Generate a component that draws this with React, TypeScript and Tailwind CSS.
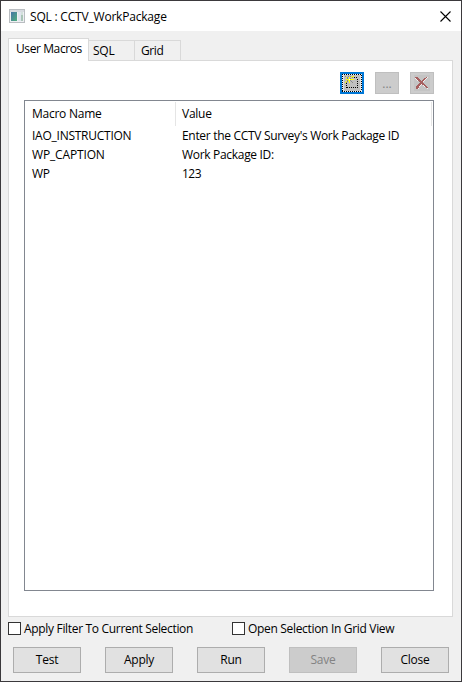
import React from 'react';

const rows = [
  { name: 'IAO_INSTRUCTION', value: "Enter the CCTV Survey's Work Package ID", nameCls: 'tracking-[-0.25px]', valueCls: 'tracking-[-0.31px]' },
  { name: 'WP_CAPTION', value: 'Work Package ID:', nameCls: 'tracking-[-0.15px]', valueCls: 'tracking-[-0.31px]' },
  { name: 'WP', value: '123', nameCls: 'tracking-[-0.25px]', valueCls: 'tracking-[-0.5px]' },
];

const palette: Record<string, string> = {
  y: '#ffff00',
  g: '#8a8a8a',
  w: '#ffffff',
  r: '#a65f5f',
  h: '#f3efef',
};

// Sparkle over the top-left corner of a dotted frame
const newPixels = [
  'g..g.g.yy',
  '.yg.y.yg.',
  '..g.yg...',
  '.yyywyyyy',
  '..gyyg...',
  '.yg.y.g..',
  'yg..y..g.',
];

// Bevelled cross: red strokes with a light edge on the right
const deletePixels = [
  'rrr........rh.',
  'hrrr.....rrh..',
  '.hrrr...rrh...',
  '..hrrr.rrh....',
  '....rrrrh.....',
  '.....rrr......',
  '....rrrrr.....',
  '...rrrhrrr....',
  '..rrrh..hrr...',
  '.rrrh....hrr..',
  '.rrr.......rr.',
  '.rrh........h.',
];

function Pixels({ map, x, y }: { map: string[]; x: number; y: number }) {
  return (
    <>
      {map.flatMap((line, j) =>
        line.split('').map((c, i) =>
          palette[c] ? <rect key={`${i}-${j}`} x={x + i} y={y + j} width="1" height="1" fill={palette[c]} /> : null,
        ),
      )}
    </>
  );
}

function AppIcon() {
  return (
    <svg width="16" height="14" viewBox="0 0 16 14" shapeRendering="crispEdges">
      <defs>
        <linearGradient id="screen" x1="0" y1="0" x2="1" y2="1">
          <stop offset="0" stopColor="#4474a6" />
          <stop offset="1" stopColor="#4fae7c" />
        </linearGradient>
      </defs>
      <rect width="16" height="14" fill="#b9bdc1" />
      <rect x="1" y="1" width="14" height="2" fill="#d6dadf" />
      <rect x="1" y="3" width="14" height="10" fill="#eef0f3" />
      <rect x="2" y="3" width="6" height="9" fill="url(#screen)" />
      <rect x="9" y="3" width="3" height="9" fill="#dfe5ee" />
      <rect x="12" y="3" width="2" height="3" fill="#d3e0dc" />
      <rect x="12" y="6" width="2" height="6" fill="#a9c4b6" />
    </svg>
  );
}

function NewIcon() {
  return (
    <svg width="24" height="22" viewBox="0 0 24 22" shapeRendering="crispEdges">
      <rect width="24" height="22" fill="#0078d7" />
      <rect x="2" y="2" width="20" height="18" fill="#f0f0f0" />
      <path d="M2 2.5h20M2 19.5h20M2.5 2v18M21.5 3v16" fill="none" stroke="#000" strokeDasharray="1 1" />
      <rect x="3" y="3" width="18" height="16" fill="#e1e1e1" />
      <rect x="4" y="3" width="16" height="16" fill="#c0c0c0" />
      <path d="M14 5.5h4M17.5 7v9M6.5 11v5M7 15.5h11" fill="none" stroke="#000" strokeDasharray="1 1" />
      <Pixels map={newPixels} x={5} y={4} />
    </svg>
  );
}

function DeleteIcon() {
  return (
    <svg width="24" height="22" viewBox="0 0 24 22" shapeRendering="crispEdges">
      <rect width="24" height="22" fill="#bfbfbf" />
      <rect x="1" y="1" width="22" height="20" fill="#cccccc" />
      <rect x="4" y="3" width="16" height="16" fill="#c4c4c4" />
      <Pixels map={deletePixels} x={5} y={5} />
    </svg>
  );
}

function Check({ label }: { label: string }) {
  return (
    <label className="flex h-[13px] items-center">
      <span className="size-[13px] shrink-0 border border-[#333] bg-white" />
      <span className="ml-[3px] tracking-[-0.32px]">{label}</span>
    </label>
  );
}

const actions = ['Test', 'Apply', 'Run', 'Save', 'Close'];

export default function App() {
  return (
    <div className="flex h-[682px] w-[462px] flex-col overflow-hidden border border-[#3b393c] bg-[#f0f0f0] font-['Open_Sans','Noto_Sans',sans-serif] text-[12px] leading-[19px] tracking-[-0.25px] whitespace-nowrap text-black">
      <header className="flex h-[30px] shrink-0 items-center bg-white pr-[10px] pl-[8px]">
        <AppIcon />
        <span className="ml-[5px] tracking-[-0.2px]">SQL : CCTV_WorkPackage</span>
        <svg className="ml-auto" width="11" height="11" viewBox="0 0 11 11">
          <path d="M.5.5l10 10M10.5.5l-10 10" stroke="#000" strokeWidth="1.1" />
        </svg>
      </header>

      <div className="mt-[7px] ml-[7px] flex h-[22px] shrink-0 items-end">
        <div className="z-10 -mb-px h-[23px] w-[81px] border border-b-0 border-[#d9d9d9] bg-white pl-[7px] leading-[20px] tracking-[-0.4px]">User Macros</div>
        <div className="h-[20px] w-[46px] border-t border-r border-[#d9d9d9] pl-[4px] leading-[20px]">SQL</div>
        <div className="h-[20px] w-[46px] border-t border-r border-[#d9d9d9] pl-[6px] leading-[20px] tracking-[-0.4px]">Grid</div>
      </div>

      <main className="ml-[7px] flex h-[557px] w-[445px] shrink-0 flex-col border border-[#d9d9d9] bg-white pt-[11px] pl-[15px]">
        <div className="flex h-[22px] w-[410px] shrink-0 justify-end gap-[11px]">
          <button className="h-[22px] w-[24px]"><NewIcon /></button>
          <button className="h-[22px] w-[24px] border border-[#bfbfbf] bg-[#cccccc] text-center leading-[19px] tracking-normal text-[#838383]">...</button>
          <button className="h-[22px] w-[24px]"><DeleteIcon /></button>
        </div>
        <section className="mt-[6px] h-[491px] w-[410px] shrink-0 border border-[#828790] pt-px">
          <div className="mr-px flex h-[24px] border-r border-[#e5e5e5] leading-[24px]">
            <div className="w-[151px] border-r border-[#e5e5e5] pl-[7px]">Macro Name</div>
            <div className="pl-[6px]">Value</div>
          </div>
          {rows.map((r) => (
            <div key={r.name} className="flex h-[19px]">
              <div className={`w-[151px] pl-[7px] ${r.nameCls}`}>{r.name}</div>
              <div className={`pl-[6px] ${r.valueCls}`}>{r.value}</div>
            </div>
          ))}
        </section>
      </main>

      <div className="mt-[5px] ml-[7px] grid h-[13px] shrink-0 grid-cols-[224px_1fr]">
        <Check label="Apply Filter To Current Selection" />
        <Check label="Open Selection In Grid View" />
      </div>

      <footer className="mt-[12px] ml-[12px] flex shrink-0 gap-[24px]">
        {actions.map((a) => (
          <button
            key={a}
            disabled={a === 'Save'}
            className="h-[26px] w-[68px] border border-[#adadad] bg-[#e1e1e1] text-center leading-[24px] disabled:border-[#bfbfbf] disabled:bg-[#cccccc] disabled:text-[#838383]"
          >
            {a}
          </button>
        ))}
      </footer>
    </div>
  );
}
